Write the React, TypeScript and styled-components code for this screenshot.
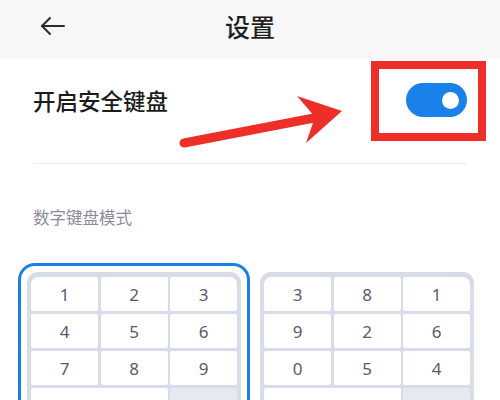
import styled, { createGlobalStyle } from 'styled-components';

const GlobalStyle = createGlobalStyle`
  html, body { margin: 0; padding: 0; background: #fff; }
  body { font-family: "Noto Sans", "Noto Sans CJK SC", sans-serif; }
  * { box-sizing: border-box; }
`;

const Page = styled.div`
  position: relative;
  width: 500px;
  height: 400px;
  overflow: hidden;
  background: #fff;
`;

const Header = styled.header`
  display: grid;
  grid-template-columns: 1fr auto 1fr;
  align-items: center;
  height: 59px;
  padding: 0 40px 8px;
  background: #f7f7f7;
`;

const BackButton = styled.button`
  display: flex;
  align-items: center;
  justify-self: start;
  padding: 0;
  border: 0;
  background: none;
  color: #2b2b2b;
`;

const Title = styled.h1`
  margin: 0;
  font-family: "Noto Sans CJK SC", sans-serif;
  font-size: 25px;
  line-height: 30px;
  font-weight: 500;
  color: #1f1f1f;
`;

const SettingRow = styled.div`
  display: flex;
  align-items: center;
  justify-content: space-between;
  height: 82px;
  margin: 0 33px;
`;

const SettingName = styled.span`
  font-family: "Noto Sans CJK SC", sans-serif;
  font-size: 22.5px;
  font-weight: 500;
  color: #1c1c1c;
`;

const Toggle = styled.button<{ $on: boolean }>`
  position: relative;
  width: 61px;
  height: 34px;
  padding: 0;
  border: 0;
  border-radius: 17px;
  background: ${p => (p.$on ? '#1a80ea' : '#d5d8e0')};

  &::after {
    content: "";
    position: absolute;
    top: 8.5px;
    ${p => (p.$on ? 'right: 8px;' : 'left: 8px;')}
    width: 17px;
    height: 17px;
    border-radius: 50%;
    background: #fff;
  }
`;

const Divider = styled.hr`
  margin: 22px 33px 0;
  border: 0;
  border-top: 1px solid #ececee;
`;

const SectionLabel = styled.div`
  margin: 43px 33px 0;
  font-family: "Noto Sans CJK SC", sans-serif;
  font-size: 16.5px;
  line-height: 20px;
  color: #8a8d99;
`;

const KeyboardList = styled.div`
  display: grid;
  grid-template-columns: 232px 232px;
  gap: 1px;
  margin-top: 36px;
  padding: 0 18px;
`;

const KeyboardOption = styled.div<{ $selected: boolean }>`
  padding: 6px;
  border: 3px solid ${p => (p.$selected ? '#1a7fe8' : 'transparent')};
  border-radius: 17px;
`;

const Pad = styled.div`
  display: grid;
  grid-template-columns: repeat(3, 1fr);
  gap: 3px 2.5px;
  padding: 5px 4px;
  border-radius: 11px;
  background: #d8dce8;
`;

const Key = styled.div<{ $span?: number; $fn?: boolean }>`
  display: flex;
  align-items: center;
  justify-content: center;
  height: 34px;
  grid-column: span ${p => p.$span ?? 1};
  border-radius: 2px;
  background: ${p => (p.$fn ? '#e7e9f1' : '#fff')};
  font-family: "Noto Sans", sans-serif;
  font-size: 17px;
  color: #575b6c;

  &:nth-child(1) { border-top-left-radius: 7px; }
  &:nth-child(3) { border-top-right-radius: 7px; }
`;

const Highlight = styled.div`
  position: absolute;
  left: 371px;
  top: 61px;
  width: 115px;
  height: 80px;
  border: 8px solid #ee2e29;
  pointer-events: none;
`;

const Pointer = styled.svg`
  position: absolute;
  left: 0;
  top: 0;
  pointer-events: none;
`;

const keyboards = [
  { selected: true, keys: ['1', '2', '3', '4', '5', '6', '7', '8', '9'], zero: '0' },
  { selected: false, keys: ['3', '8', '1', '9', '2', '6', '0', '5', '4'], zero: '7' },
];

export default function App() {
  return (
    <Page>
      <GlobalStyle />
      <Header>
        <BackButton aria-label="返回">
          <svg width="26" height="20" viewBox="0 0 26 20" fill="none" stroke="currentColor" strokeWidth={2} strokeLinecap="round" strokeLinejoin="round">
            <path d="M24 10H2" />
            <path d="M10 2L2 10l8 8" />
          </svg>
        </BackButton>
        <Title>设置</Title>
        <span />
      </Header>

      <SettingRow>
        <SettingName>开启安全键盘</SettingName>
        <Toggle $on aria-label="开启安全键盘" />
      </SettingRow>
      <Divider />

      <SectionLabel>数字键盘模式</SectionLabel>
      <KeyboardList>
        {keyboards.map((kb, i) => (
          <KeyboardOption key={i} $selected={kb.selected}>
            <Pad>
              {kb.keys.map(k => (
                <Key key={k}>{k}</Key>
              ))}
              <Key $span={2}>{kb.zero}</Key>
              <Key $fn />
            </Pad>
          </KeyboardOption>
        ))}
      </KeyboardList>

      <Highlight />
      <Pointer width="500" height="400" viewBox="0 0 500 400">
        <line x1="184" y1="143" x2="314" y2="118" stroke="#ee2e29" strokeWidth="9" strokeLinecap="round" />
        <polygon points="342,111 297,96 315,117 306,143" fill="#ee2e29" />
      </Pointer>
    </Page>
  );
}
